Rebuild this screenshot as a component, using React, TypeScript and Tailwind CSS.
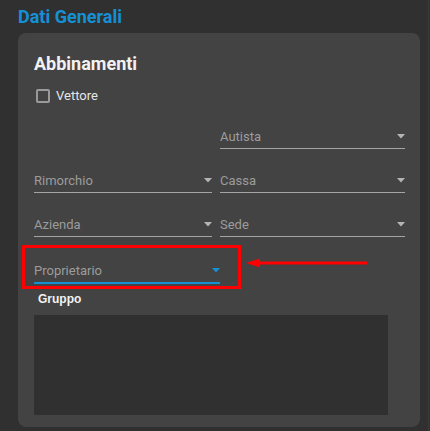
import React from "react";

function Caret({ blue }: { blue?: boolean }) {
  return (
    <svg width="8" height="5" viewBox="0 0 8 5" className="mb-[6px]">
      <path d="M0 0 L8 0 L4 4.5 Z" fill={blue ? "#1590d5" : "#b4b4b4"} />
    </svg>
  );
}

function Field({ label, w, active }: { label: string; w: string; active?: boolean }) {
  return (
    <div className={`${active ? "h-[47px]" : "h-[44px]"} flex items-end ${w}`}>
      <div
        className={`w-full flex items-end justify-between pb-[3px] ${
          active ? "border-b-2 border-[#1590d5]" : "border-b border-[#a4a4a4]"
        }`}
      >
        <span className="text-[13px] leading-[16px] text-[#9c9c9c]">{label}</span>
        <Caret blue={active} />
      </div>
    </div>
  );
}

export default function App() {
  return (
    <div
      className="relative w-[430px] h-[431px] bg-[#303030] overflow-hidden"
      style={{ fontFamily: "Roboto, 'Liberation Sans', sans-serif" }}
    >
      <div className="pl-[18px] pt-[5px] text-[18px] leading-[24px] font-bold text-[#1590d5]">
        Dati Generali
      </div>
      <div className="relative ml-[18px] mt-[4px] w-[402px] h-[394px] rounded-[8px] bg-[#434343] pl-[16px] pt-[19px]">
        <div className="text-[18px] leading-[24px] font-bold text-[#f2f2f2]">Abbinamenti</div>
        <div className="mt-[10px] h-[20px] flex items-center pl-[2px]">
          <div className="w-[14px] h-[14px] border-2 border-[#9a9a9a] rounded-[2px]" />
          <span className="ml-[6px] text-[13px] text-[#e6e6e6]">Vettore</span>
        </div>
        <div className="grid grid-cols-[178px_185px] gap-x-[8px]">
          <div className="h-[43px]" />
          <div className="h-[43px] flex items-end">
            <Field label="Autista" w="w-full" />
          </div>
          <Field label="Rimorchio" w="w-full" />
          <Field label="Cassa" w="w-full" />
          <Field label="Azienda" w="w-full" />
          <Field label="Sede" w="w-full" />
        </div>
        <Field label="Proprietario" w="w-[186px]" active />
        <div
          className="mt-[7px] ml-[4px] text-[12px] leading-[16px] font-bold text-[#f2f2f2]"
          style={{ fontFamily: "'Liberation Sans', Arial, sans-serif" }}
        >
          Gruppo
        </div>
        <div className="mt-[8px] w-[354px] h-[100px] bg-[#303030]" />

        <div className="absolute left-[4px] top-[212px] w-[219px] h-[44px] border-[3px] border-[#ff0000]" />
        <svg className="absolute left-[228px] top-[224px]" width="122" height="12" viewBox="0 0 122 12">
          <rect x="11" y="4.5" width="110" height="3" fill="#ff0000" />
          <path d="M0 6 L14 1.5 L14 10.5 Z" fill="#ff0000" />
        </svg>
      </div>
      <div className="absolute right-[1px] top-0 w-[1px] h-full bg-[#3b3b3b]" />
    </div>
  );
}
